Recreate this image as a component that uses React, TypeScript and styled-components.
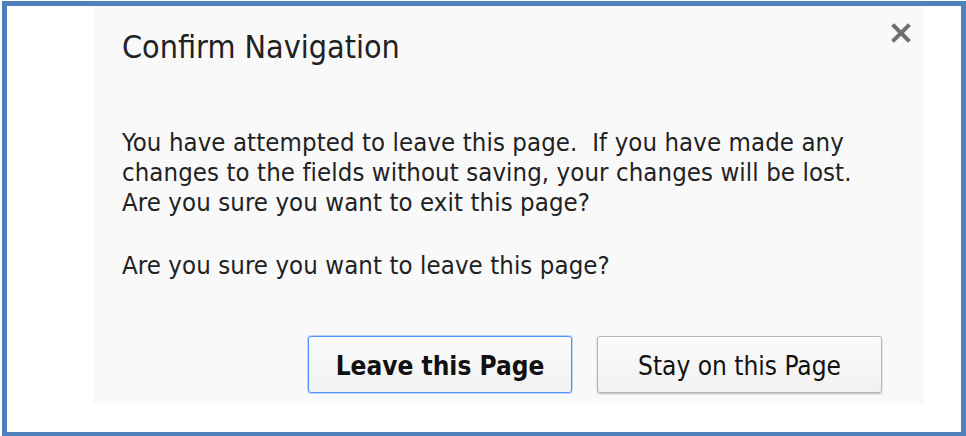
import styled, { createGlobalStyle } from "styled-components";

const GlobalStyle = createGlobalStyle`
  html, body {
    margin: 0;
    padding: 0;
    background: #ffffff;
  }
  body {
    font-family: "DejaVu Sans Condensed", "DejaVu Sans", Verdana, sans-serif;
  }
`;

const Frame = styled.div`
  box-sizing: border-box;
  margin: 1px 0 0 2px;
  width: 964px;
  height: 436px;
  border: 5px solid #4f81bd;
  background: #ffffff;
  padding-left: 86px;
`;

const Dialog = styled.div`
  position: relative;
  box-sizing: border-box;
  width: 831px;
  height: 397px;
  background: #f9f9f9;
  padding: 22px 29px 0 29px;
  display: flex;
  flex-direction: column;
  color: #222222;
`;

const Title = styled.h1`
  margin: 0;
  font-size: 32px;
  font-weight: normal;
  line-height: 38px;
`;

const CloseButton = styled.button`
  position: absolute;
  top: 14px;
  right: 10px;
  border: none;
  background: none;
  padding: 0;
  width: 26px;
  height: 26px;
  display: flex;
  align-items: center;
  justify-content: center;
  cursor: pointer;
`;

const Message = styled.p`
  margin: ${(props: { $top: number }) => props.$top}px 0 0 0;
  font-size: 25.5px;
  letter-spacing: 0.1px;
  line-height: 30px;
  white-space: pre;
`;

const Actions = styled.div`
  display: flex;
  gap: 25px;
  margin-top: auto;
  margin-bottom: 10px;
  padding-left: 186px;
`;

const Button = styled.button`
  box-sizing: border-box;
  height: 57px;
  padding-top: 3px;
  width: ${(props: { $primary?: boolean }) => (props.$primary ? "264px" : "285px")};
  font-family: "DejaVu Sans Condensed", "DejaVu Sans", Verdana, sans-serif;
  font-size: 26px;
  font-weight: ${(props: { $primary?: boolean }) => (props.$primary ? "bold" : "normal")};
  color: #111111;
  background: linear-gradient(#fbfbfb, #f1f1f1);
  border: 1px solid
    ${(props: { $primary?: boolean }) => (props.$primary ? "#4d90fe" : "#b5b5b5")};
  border-radius: 3px;
  box-shadow: ${(props: { $primary?: boolean }) =>
    props.$primary
      ? "0 0 0 1px rgba(77, 144, 254, 0.35)"
      : "0 1px 2px rgba(0, 0, 0, 0.25)"};
  cursor: pointer;
`;

const App = () => {
  return (
    <>
      <GlobalStyle />
      <Frame>
        <Dialog>
          <Title>Confirm Navigation</Title>
          <CloseButton aria-label="Close">
            <svg width="20" height="20" viewBox="0 0 20 20">
              <path
                d="M3 3 L17 17 M17 3 L3 17"
                stroke="#707070"
                strokeWidth="4"
                strokeLinecap="square"
              />
            </svg>
          </CloseButton>
          <Message $top={61}>
            {"You have attempted to leave this page.  If you have made any\nchanges to the fields without saving, your changes will be lost.\nAre you sure you want to exit this page?"}
          </Message>
          <Message $top={33}>Are you sure you want to leave this page?</Message>
          <Actions>
            <Button $primary>Leave this Page</Button>
            <Button>Stay on this Page</Button>
          </Actions>
        </Dialog>
      </Frame>
    </>
  );
};

export default App;
